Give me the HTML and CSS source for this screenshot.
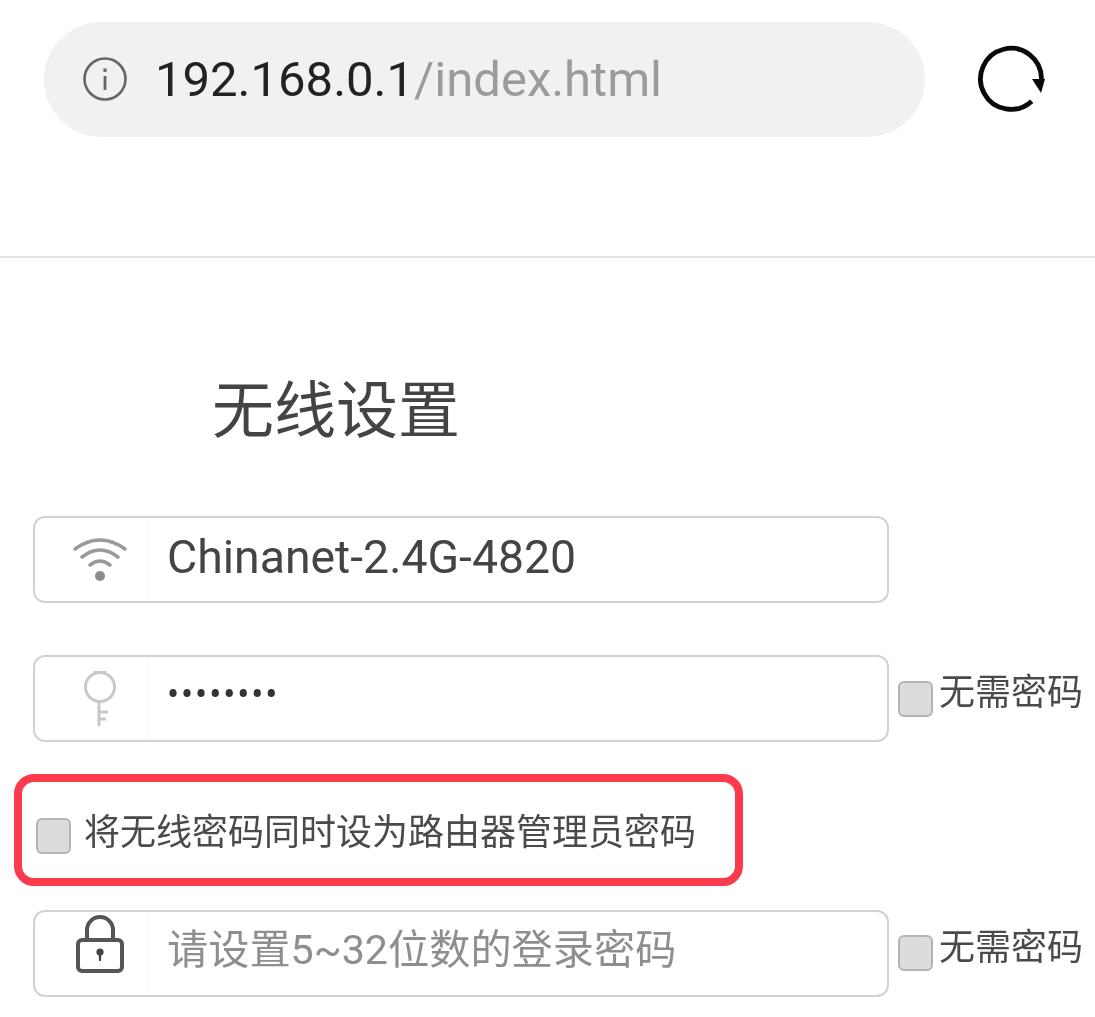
FILE: index.html
```html
<!DOCTYPE html>
<html>

<head>
    <meta charset="UTF-8">
    <title>无线设置</title>
    <link rel="stylesheet" href="styles.css">
</head>

<body>
    <div class="topBar">
        <div class="urlBox">
            <svg class="infoIcon" width="46" height="46" viewBox="0 0 46 46">
                <circle cx="23" cy="23" r="20.5" fill="none" stroke="#666" stroke-width="2.6"/>
                <rect x="21.6" y="20" width="2.8" height="14" fill="#666"/>
                <rect x="21.4" y="12.5" width="3.2" height="3.4" fill="#666"/>
            </svg>
            <span class="host">192.168.0.1</span><span class="path">/index.html</span>
        </div>
        <svg class="reload" width="72" height="72" viewBox="0 0 72 72">
            <path d="M56.7 58.2A30.5 30.5 0 1 1 66.5 36" fill="none" stroke="#0a0a0a" stroke-width="4.8" stroke-linecap="butt"/>
            <path d="M57 36H70L66 50Z" fill="#0a0a0a"/>
        </svg>
    </div>

    <div class="main">
        <h1 class="title">无线设置</h1>

        <div class="row">
            <div class="field">
                <div class="fieldIcon">
                    <svg width="54" height="50" viewBox="0 0 54 50">
                        <g fill="none" stroke="#9a9a9a" stroke-width="3.6" stroke-linecap="round">
                            <path d="M2 14Q27 -4 52 14"/>
                            <path d="M9 22Q27 8 45 22"/>
                            <path d="M17 30Q27 22 37 30"/>
                        </g>
                        <circle cx="27" cy="41" r="5" fill="#8c8c8c"/>
                    </svg>
                </div>
                <span class="fieldText">Chinanet-2.4G-4820</span>
            </div>
        </div>

        <div class="row">
            <div class="field">
                <div class="fieldIcon">
                    <svg width="36" height="58" viewBox="0 0 36 58">
                        <g fill="none" stroke="#c8c8c8" stroke-width="3">
                            <circle cx="18" cy="17" r="14.5"/>
                            <path d="M17 31V56"/>
                            <path d="M17 42H26M17 49H24"/>
                            <path d="M12 2H24" stroke-width="2"/>
                        </g>
                    </svg>
                </div>
                <span class="fieldText dots">••••••••</span>
            </div>
            <label class="noPwd"><span class="checkBox"></span><span class="noPwdText">无需密码</span></label>
        </div>

        <div class="syncBox">
            <span class="checkBox syncCheck"></span>
            <span class="syncText">将无线密码同时设为路由器管理员密码</span>
        </div>

        <div class="row">
            <div class="field">
                <div class="fieldIcon">
                    <svg class="lock" width="50" height="58" viewBox="0 0 50 58">
                        <path d="M12 26V15A13 13 0 0 1 38 15V26" fill="none" stroke="#555" stroke-width="4"/>
                        <rect x="3" y="25" width="44" height="31" rx="4" fill="none" stroke="#555" stroke-width="4"/>
                        <circle cx="25" cy="37" r="3.6" fill="#444"/>
                        <path d="M23.6 38H26.4L26 46H24Z" fill="#444"/>
                    </svg>
                </div>
                <span class="fieldText holder">请设置5~32位数的登录密码</span>
            </div>
            <label class="noPwd lastNoPwd"><span class="checkBox"></span><span class="noPwdText">无需密码</span></label>
        </div>
    </div>
</body>

</html>
```
FILE: styles.css
```css
* {
    margin: 0;
    padding: 0;
    box-sizing: border-box;
}

html,
body {
    background-color: #fff;
    overflow: hidden;
}

body {
    width: 1095px;
    height: 1017px;
    font-family: Roboto, "Noto Sans CJK SC", sans-serif;
    filter: blur(0.6px);
}

.topBar {
    height: 258px;
    padding: 22px 0 0 44px;
    border-bottom: solid 2px #e4e4e4;
    display: flex;
    align-items: flex-start;
}

.urlBox {
    width: 881px;
    height: 115px;
    border-radius: 58px;
    background-color: #f1f1f1;
    display: flex;
    align-items: center;
    padding: 0 0 0 38px;
    font-size: 49px;
}

.infoIcon {
    margin-right: 27px;
    margin-top: -1px;
}

.host {
    color: #222;
}

.path {
    color: #9b9b9b;
}

.reload {
    margin: 21px 0 0 50px;
}

.main {
    padding: 0 0 0 33px;
}

.title {
    font-size: 62px;
    font-weight: 400;
    line-height: 80px;
    color: #444;
    padding: 114px 0 0 179px;
    height: 258px;
}

.row {
    display: flex;
    align-items: center;
    margin-bottom: 52px;
}

.field {
    width: 856px;
    height: 87px;
    border: solid 2px #d2d2d2;
    border-radius: 12px;
    display: flex;
    align-items: center;
    flex-shrink: 0;
}

.fieldIcon {
    width: 113px;
    height: 100%;
    padding-left: 17px;
    border-right: solid 1px #f8f8f8;
    display: flex;
    align-items: center;
    justify-content: center;
    flex-shrink: 0;
}

.fieldText {
    padding-left: 19px;
    font-size: 46.4px;
    line-height: 50px;
    margin-top: -5px;
    color: #444;
}

.dots {
    font-size: 36px;
    letter-spacing: 1.9px;
    margin-top: -8px;
    color: #333;
}

.holder {
    font-size: 41.2px;
    margin-top: -8px;
    color: #8e8e8e;
}

.lock {
    margin-top: -20px;
}

.checkBox {
    display: inline-block;
    width: 35px;
    height: 36px;
    border: solid 2px #b4b4b4;
    border-radius: 6px;
    background-color: #dcdcdc;
    flex-shrink: 0;
}

.noPwd {
    display: flex;
    align-items: center;
    margin-left: 9px;
    font-size: 36px;
    line-height: 40px;
    color: #4a4a4a;
    white-space: nowrap;
}

.lastNoPwd .checkBox {
    margin-top: -2px;
}

.noPwdText {
    margin-left: 6px;
    margin-top: -12px;
}

.syncBox {
    width: 729px;
    height: 112px;
    margin: -20px 0 24px -19px;
    border: solid 8px #fb3a4d;
    border-radius: 20px;
    display: flex;
    align-items: center;
    padding: 0 0 0 14px;
}

.syncCheck {
    margin-top: 12px;
}

.syncText {
    margin-left: 13px;
    margin-top: -3px;
    font-size: 36px;
    color: #4a4a4a;
    white-space: nowrap;
}
```
